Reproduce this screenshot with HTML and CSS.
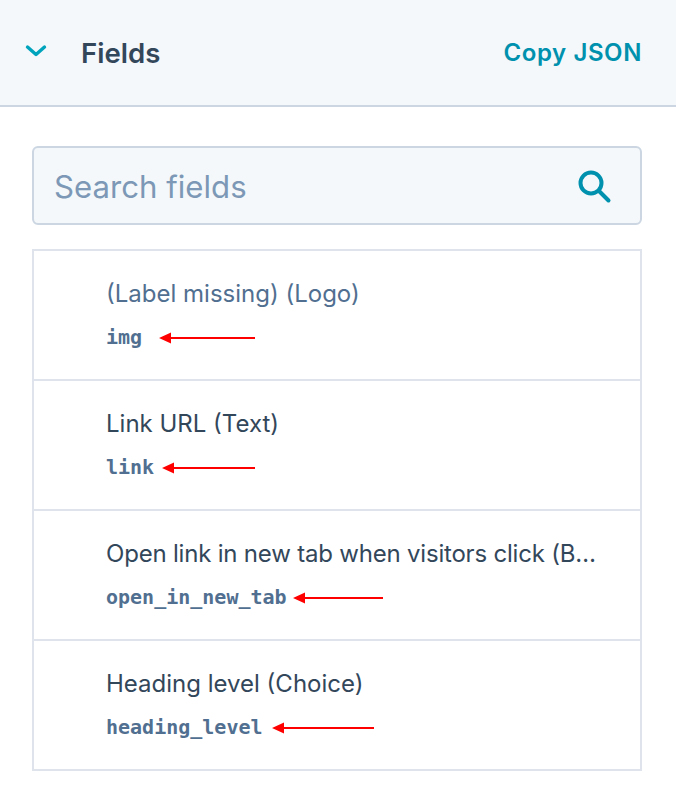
FILE: index.html
```html
<!DOCTYPE html>
<html lang="en">
<head>
  <meta charset="utf-8">
  <title>Fields</title>
  <link rel="stylesheet" href="styles.css">
</head>
<body>
  <div class="header">
    <div class="header-left">
      <svg class="chevron" width="22" height="14" viewBox="0 0 22 14"><path d="M2.5 3 L11 10.5 L19.5 3" fill="none" stroke="#00a4bd" stroke-width="3.4" stroke-linecap="round" stroke-linejoin="round"/></svg>
      <span class="title">Fields</span>
    </div>
    <a class="copy">Copy JSON</a>
  </div>

  <div class="content">
    <div class="search">
      <span class="search-text">Search fields</span>
      <svg width="36" height="36" viewBox="0 0 36 36"><circle cx="15" cy="15" r="10.5" fill="none" stroke="#0091ae" stroke-width="4"/><path d="M23 23 L32.5 32.5" stroke="#0091ae" stroke-width="4" stroke-linecap="round"/></svg>
    </div>

    <div class="list">
      <div class="row">
        <div class="label muted">(Label missing) (Logo)</div>
        <div class="name-line">
          <code>img</code>
          <svg class="arrow arrow-img" width="96" height="12" viewBox="0 0 96 12"><path d="M0 6 L12 0.5 L12 5 L96 5 L96 7 L12 7 L12 11.5 Z" fill="#fe0000"/></svg>
        </div>
      </div>
      <div class="row">
        <div class="label">Link URL (Text)</div>
        <div class="name-line">
          <code>link</code>
          <svg class="arrow arrow-link" width="93" height="12" viewBox="0 0 93 12"><path d="M0 6 L12 0.5 L12 5 L93 5 L93 7 L12 7 L12 11.5 Z" fill="#fe0000"/></svg>
        </div>
      </div>
      <div class="row">
        <div class="label long">Open link in new tab when visitors click (B…</div>
        <div class="name-line">
          <code>open_in_new_tab</code>
          <svg class="arrow arrow-tab" width="90" height="12" viewBox="0 0 90 12"><path d="M0 6 L12 0.5 L12 5 L90 5 L90 7 L12 7 L12 11.5 Z" fill="#fe0000"/></svg>
        </div>
      </div>
      <div class="row">
        <div class="label">Heading level (Choice)</div>
        <div class="name-line">
          <code>heading_level</code>
          <svg class="arrow arrow-level" width="102" height="12" viewBox="0 0 102 12"><path d="M0 6 L12 0.5 L12 5 L102 5 L102 7 L12 7 L12 11.5 Z" fill="#fe0000"/></svg>
        </div>
      </div>
    </div>
  </div>
</body>
</html>
```
FILE: styles.css
```css
html {
  height: 100%;
}
body {
  margin: 0;
  padding: 0;
  background: #ffffff;
  color: #33475b;
  font-family: Inter, "Open Sans", sans-serif;
}
.header {
  height: 105px;
  display: flex;
  align-items: center;
  justify-content: space-between;
  padding: 0 34px 0 25px;
  background-color: #f5f8fa;
  border-bottom: 2px solid #cbd6e2;
}
.header-left {
  display: flex;
  align-items: center;
}
.chevron {
  margin-top: -4px;
}
.title {
  margin-left: 34px;
  font-size: 27.6px;
  font-weight: 600;
}
.copy {
  font-size: 24px;
  font-weight: 600;
  letter-spacing: 0.6px;
  color: #0091ae;
}
.content {
  padding: 39px 34px 0 32px;
}
.search {
  height: 75px;
  display: flex;
  align-items: center;
  justify-content: space-between;
  padding: 0 28px 0 20px;
  background-color: #f5f8fa;
  border: 2px solid #cbd6e2;
  border-radius: 6px;
}
.search-text {
  padding-top: 2px;
  font-size: 31.2px;
  color: #7c98b6;
}
.list {
  margin-top: 24px;
  border: 2px solid #dfe3eb;
  border-bottom: 0;
}
.row {
  height: 128px;
  padding-left: 72px;
  border-bottom: 2px solid #dfe3eb;
  overflow: hidden;
}
.label {
  margin-top: 26px;
  height: 34px;
  line-height: 34px;
  font-size: 24px;
  white-space: nowrap;
}
.long {
  letter-spacing: -0.2px;
}
.muted {
  color: #516f90;
}
.name-line {
  display: flex;
  align-items: center;
  margin-top: 11px;
  height: 30px;
}
code {
  font-family: "DejaVu Sans Mono", monospace;
  font-size: 20px;
  font-weight: 700;
  color: #516f90;
}
.arrow {
  margin-top: 2px;
}
.arrow-img {
  margin-left: 17px;
}
.arrow-link {
  margin-left: 8px;
}
.arrow-tab {
  margin-left: 6px;
}
.arrow-level {
  margin-left: 9px;
}
```
